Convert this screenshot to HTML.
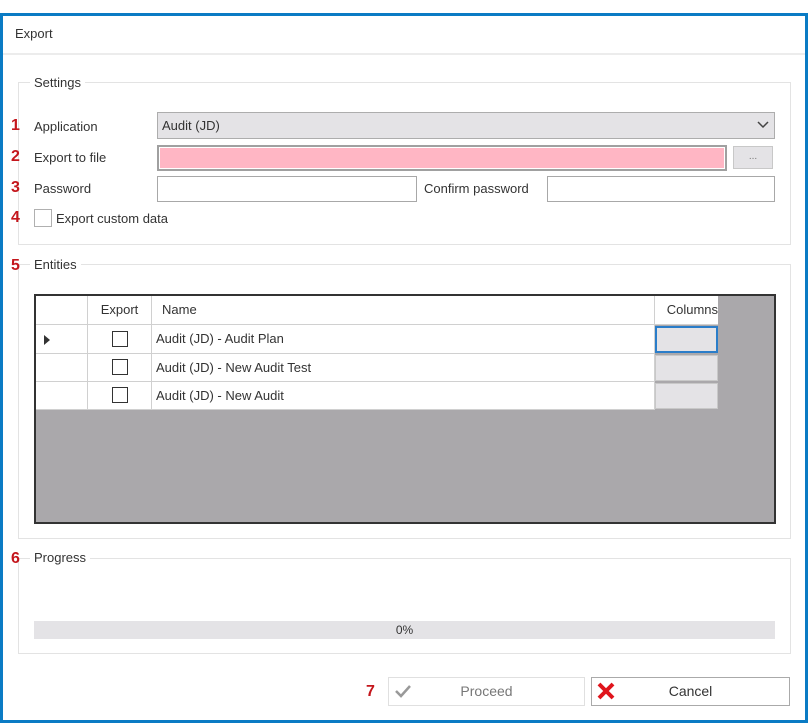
<!DOCTYPE html>
<html><head><style>
*{box-sizing:border-box;margin:0;padding:0}
body{width:808px;height:723px;background:#fff;position:relative;font-family:"Liberation Sans",sans-serif;font-size:13px;color:#333;overflow:hidden}
.a{position:absolute}
.n{position:absolute;left:11px;color:#c4161c;font-weight:bold;font-size:16px}
.grp{position:absolute;border:1px solid #e3e3e3}
.lbl{position:absolute;background:#fff;padding:0 4px}
.td{position:absolute;background:#fff;border-right:1px solid #d0d0d0;border-bottom:1px solid #d0d0d0;font-size:13px;line-height:28px;padding-left:4px}
.cb{position:absolute;width:16px;height:16px;border:1px solid #333;background:#fff}
.cc{position:absolute;background:#e4e3e6;border:1px solid #c8c8c8}
</style></head><body>
<div class="a" style="left:0;top:13px;width:808px;height:710px;border:3px solid #0a7bc4"></div>
<div class="a" style="left:15px;top:26px">Export</div>
<div class="a" style="left:3px;top:53px;width:802px;height:2px;background:#ececec"></div>

<div class="grp" style="left:18px;top:82px;width:773px;height:163px"></div>
<div class="lbl" style="left:30px;top:75px">Settings</div>
<div class="n" style="top:117px">1</div><div class="a" style="left:34px;top:119px">Application</div>
<div class="a" style="left:157px;top:112px;width:618px;height:27px;background:#e4e3e6;border:1px solid #adadad;padding:5px 4px">Audit (JD)</div>
<svg class="a" style="left:757px;top:121px" width="12" height="8"><path d="M1 1l5 5 5-5" stroke="#444" stroke-width="1.5" fill="none"/></svg>
<div class="n" style="top:148px">2</div><div class="a" style="left:34px;top:150px">Export to file</div>
<div class="a" style="left:157px;top:145px;width:570px;height:26px;background:#ffb6c4;border:2px solid #a0a0a0;box-shadow:inset 0 0 0 1px #fff"></div>
<div class="a" style="left:733px;top:146px;width:40px;height:23px;background:#e4e3e6;border:1px solid #c8c8c8;text-align:center;font-size:10px;color:#777;line-height:20px">...</div>
<div class="n" style="top:179px">3</div><div class="a" style="left:34px;top:181px">Password</div>
<div class="a" style="left:157px;top:176px;width:260px;height:26px;border:1px solid #a8a8a8"></div>
<div class="a" style="left:424px;top:181px">Confirm password</div>
<div class="a" style="left:547px;top:176px;width:228px;height:26px;border:1px solid #a8a8a8"></div>
<div class="n" style="top:209px">4</div>
<div class="a" style="left:34px;top:209px;width:18px;height:18px;border:1px solid #b0b0b0"></div>
<div class="a" style="left:56px;top:211px">Export custom data</div>

<div class="grp" style="left:18px;top:264px;width:773px;height:275px"></div>
<div class="n" style="top:257px">5</div><div class="lbl" style="left:30px;top:257px">Entities</div>
<div class="a" style="left:34px;top:294px;width:742px;height:230px;background:#aaa8ab;border:2px solid #333"></div>
<div class="td" style="left:36px;top:296px;width:52px;height:29px"></div>
<div class="td" style="left:88px;top:296px;width:64px;height:29px;padding:0;text-align:center">Export</div>
<div class="td" style="left:152px;top:296px;width:503px;height:29px;padding-left:10px">Name</div>
<div class="td" style="left:655px;top:296px;width:63px;height:29px;padding:0;text-align:right;border-right:none">Columns</div>

<div class="td" style="left:36px;top:325px;width:52px;height:29px"></div>
<svg class="a" style="left:44px;top:335px" width="6" height="10"><path d="M0 0l6 5-6 5z" fill="#333"/></svg>
<div class="td" style="left:88px;top:325px;width:64px;height:29px"></div><div class="cb" style="left:112px;top:331px"></div>
<div class="td" style="left:152px;top:325px;width:503px;height:29px">Audit (JD) - Audit Plan</div>
<div class="cc" style="left:655px;top:326px;width:63px;height:27px;border:2px solid #2a7dc9"></div>

<div class="td" style="left:36px;top:354px;width:52px;height:28px"></div>
<div class="td" style="left:88px;top:354px;width:64px;height:28px"></div><div class="cb" style="left:112px;top:359px"></div>
<div class="td" style="left:152px;top:354px;width:503px;height:28px">Audit (JD) - New Audit Test</div>
<div class="cc" style="left:655px;top:355px;width:63px;height:26px"></div>

<div class="td" style="left:36px;top:382px;width:52px;height:28px"></div>
<div class="td" style="left:88px;top:382px;width:64px;height:28px"></div><div class="cb" style="left:112px;top:387px"></div>
<div class="td" style="left:152px;top:382px;width:503px;height:28px">Audit (JD) - New Audit</div>
<div class="cc" style="left:655px;top:383px;width:63px;height:26px"></div>

<div class="grp" style="left:18px;top:558px;width:773px;height:96px"></div>
<div class="n" style="top:550px">6</div><div class="lbl" style="left:30px;top:550px">Progress</div>
<div class="a" style="left:34px;top:621px;width:741px;height:18px;background:#e4e3e6;text-align:center;line-height:18px;font-size:12px">0%</div>

<div class="n" style="left:366px;top:683px">7</div>
<div class="a" style="left:388px;top:677px;width:197px;height:29px;border:1px solid #e0e0e0;text-align:center;line-height:27px;color:#777;font-size:14px">Proceed</div>
<svg class="a" style="left:394px;top:684px" width="18" height="14"><path d="M2 7l5 5 9-10" stroke="#999" stroke-width="2.5" fill="none"/></svg>
<div class="a" style="left:591px;top:677px;width:199px;height:29px;border:1px solid #aaa;text-align:center;line-height:27px;color:#333;font-size:14px">Cancel</div>
<svg class="a" style="left:597px;top:682px" width="18" height="18"><path d="M2 2l14 14M16 2L2 16" stroke="#e0141c" stroke-width="4"/></svg>
</body></html>
